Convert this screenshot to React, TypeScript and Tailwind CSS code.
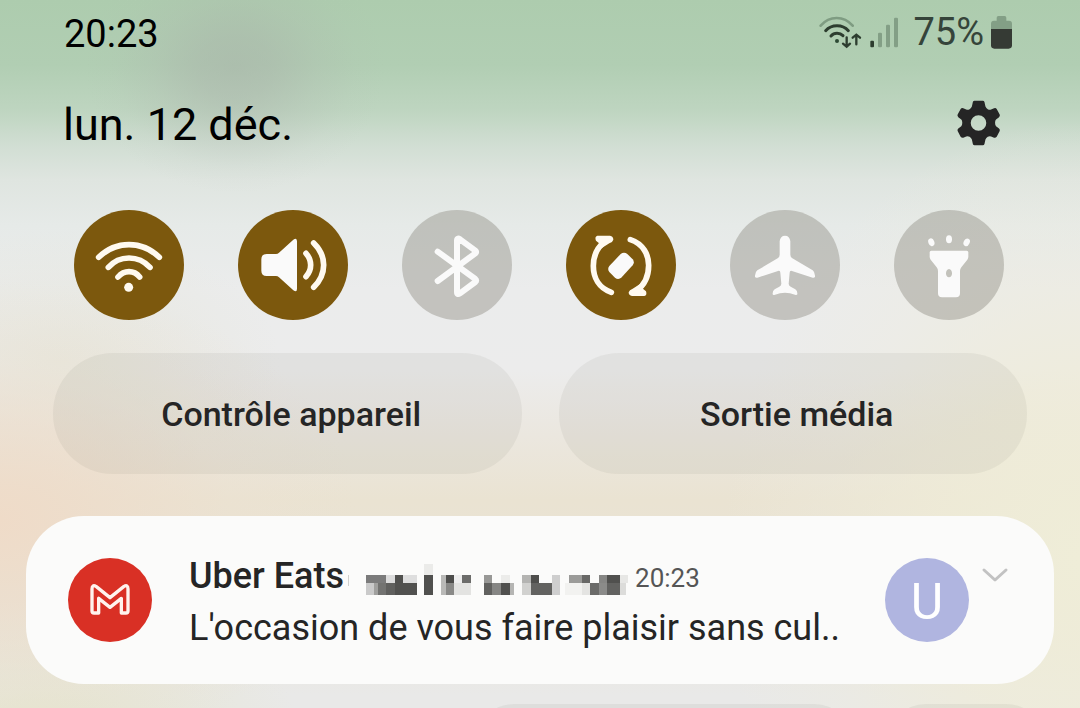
import React from "react";

type Tile = { label: string; on: boolean; icon: React.ReactNode };

const WifiIcon = () => (
  <svg viewBox="42 30 330 330" className="size-full" fill="none" stroke="#fffaf0" strokeWidth="17" strokeLinecap="round" aria-hidden="true">
    <path d="M116 172Q155 134 207 134T298 172" />
    <path d="M145 202Q170 174 207 174T270 202" />
    <path d="M174 231Q188 215 207 215T239 231" />
    <circle cx="206" cy="262" r="13.5" fill="#fffaf0" stroke="none" />
  </svg>
);

const SoundIcon = () => (
  <svg viewBox="534 30 330 330" className="size-full" aria-hidden="true">
    <path d="M604 178Q604 162 620 162H648Q653 162 657 158L700 119Q711 112 711 124V266Q711 278 700 271L657 232Q653 228 648 228H620Q604 228 604 212Z" fill="#fafafa" />
    <g fill="none" stroke="#fffaf0" strokeWidth="17" strokeLinecap="round">
      <path d="M738 160Q752 176 752 195T738 230" />
      <path d="M761 129Q791 158 791 195T761 262" />
    </g>
  </svg>
);

const BluetoothIcon = () => (
  <svg viewBox="36 30 330 330" className="size-full" fill="none" stroke="#fafafa" strokeWidth="18" strokeLinecap="round" strokeLinejoin="round" aria-hidden="true">
    <path d="M143 155L256 237Q261 241 256 246L210 280Q201 286 201 276V122Q201 112 210 118L256 152Q261 156 256 160L143 243" />
  </svg>
);

const RotateIcon = () => (
  <svg viewBox="528 30 330 330" className="size-full" aria-hidden="true">
    <g fill="none" stroke="#fffaf0" strokeWidth="17" strokeLinecap="round">
      <path d="M664 277C626 264 610 232 610 198C610 165 624 140 646 124" />
      <path d="M721 119C760 132 776 164 776 196C776 229 762 256 740 272" />
    </g>
    <path d="M622 107H660Q670 108 670 119Q668 127 658 130L632 146Q629 141 631 133L618 122Q613 110 622 107Z" fill="#fffaf0" />
    <path d="M763 288H726Q716 287 716 277Q718 269 728 266L754 250Q757 256 755 263L768 274Q772 286 763 288Z" fill="#fffaf0" />
    <path d="M692 162Q702 154 712 162L728 178Q735 187 728 196L695 232Q685 241 675 233L658 216Q651 207 658 198Z" fill="#fafafa" />
  </svg>
);

const PlaneIcon = () => (
  <svg viewBox="30 30 330 330" className="size-full" fill="#fafafa" aria-hidden="true">
    <path d="M179 124Q181 107 195 107Q209 107 211 124V164Q211 171 217 175L278 211Q286 217 285 230Q284 234 278 233L216 213Q209 211 209 218L206 251Q206 257 212 260L226 268Q233 273 232 283Q230 286 225 284Q195 272 165 284Q159 286 158 283Q157 273 164 268L178 260Q184 257 184 251L181 218Q181 211 174 213L112 233Q106 234 105 230Q104 217 112 211L173 175Q179 171 179 164Z" />
  </svg>
);

const TorchIcon = () => (
  <svg viewBox="522 30 330 330" className="size-full" fill="#fafafa" aria-hidden="true">
    <path fillRule="evenodd" d="M634 152H740Q745 152 745 157V170Q745 175 742 179L724 202Q720 207 720 213V280Q720 292 708 292H666Q654 292 654 280V213Q654 207 650 202L632 179Q629 175 629 170V157Q629 152 634 152ZM687 207Q678 209 678 220Q678 231 687 232Q696 231 696 220Q696 209 687 207Z" />
    <ellipse cx="634" cy="127" rx="9" ry="12" transform="rotate(-20 634 127)" />
    <ellipse cx="687" cy="118" rx="9" ry="12" />
    <ellipse cx="740" cy="127" rx="9" ry="12" transform="rotate(25 740 127)" />
  </svg>
);

const tiles: Tile[] = [
  { label: "Wi-Fi", on: true, icon: <WifiIcon /> },
  { label: "Son", on: true, icon: <SoundIcon /> },
  { label: "Bluetooth", on: false, icon: <BluetoothIcon /> },
  { label: "Rotation auto", on: true, icon: <RotateIcon /> },
  { label: "Mode Avion", on: false, icon: <PlaneIcon /> },
  { label: "Lampe torche", on: false, icon: <TorchIcon /> },
];

const NetworkIcons = () => (
  <svg viewBox="117 42 240 102" className="h-[34px] w-20" fill="none" strokeLinecap="round" aria-hidden="true">
    <path d="M122 74Q142 51 170 51T218 74" stroke="#7f9c82" strokeWidth="8" />
    <g stroke="#2d3d2f" strokeWidth="9">
      <path d="M137 89Q150 74 171 74T205 89" />
      <path d="M153 105Q160 97 171 97T189 104" />
      <path d="M200 109V136M189 128L200 137L210 128" strokeWidth="7" />
      <path d="M229 130V102M218 110L229 101L240 110" strokeWidth="7" />
    </g>
    <circle cx="171" cy="120" r="6" fill="#2d4a35" />
    <rect x="271" y="119" width="11" height="20" rx="3" fill="#2d3d2f" />
    <g fill="#839f86">
      <rect x="294" y="95" width="12" height="44" rx="4" />
      <rect x="318" y="71" width="12" height="68" rx="4" />
      <rect x="342" y="50" width="12" height="89" rx="4" />
    </g>
  </svg>
);

const BatteryIcon = () => (
  <svg viewBox="630 42 69 102" className="h-[34px] w-[23px]" aria-hidden="true">
    <path d="M633 84V68Q633 59 642 59H650V50Q650 45 655 45H674Q679 45 679 50V59H687Q696 59 696 68V84Z" fill="#839f86" />
    <path d="M633 84H696V133Q696 143 686 143H643Q633 143 633 133Z" fill="#353a34" />
  </svg>
);

const GearIcon = () => (
  <svg viewBox="525 295 140 145" className="h-12 w-[47px]" aria-hidden="true">
    <path
      fillRule="evenodd"
      fill="#252525"
      d="M583 300H608Q612 300 613 304L616 318Q618 323 623 326Q628 329 633 327L642 323Q647 321 650 325L659 342Q661 346 657 350L648 357Q645 360 645 367Q645 374 648 377L657 384Q661 388 659 392L650 409Q647 413 642 412L633 408Q628 406 623 409Q618 412 616 417L613 431Q612 435 608 435H583Q579 435 578 431L575 417Q573 412 568 409Q563 406 558 408L549 412Q544 413 541 409L532 392Q530 388 534 384L543 377Q546 374 546 367Q546 360 543 357L534 350Q530 346 532 342L541 325Q544 321 549 323L558 327Q563 329 568 326Q573 323 575 318L578 304Q579 300 583 300ZM595 344A23.500 23.500 0 1 0 595 391A23.500 23.500 0 1 0 595 344Z"
    />
  </svg>
);

// x, y, width, height, colour
const mosaic: [number, number, number, number, string][] = [
  [50, 101, 61, 26, "#7b7b7b"], [111, 101, 27, 26, "#dcdcdc"], [138, 101, 24, 26, "#50504e"], [162, 101, 42, 26, "#dedede"],
  [50, 127, 25, 34, "#cacaca"], [75, 127, 12, 34, "#a0a09e"], [87, 127, 25, 34, "#737371"], [112, 127, 26, 34, "#60605e"], [138, 127, 66, 34, "#51514f"],
  [226, 68, 26, 33, "#ebebe9"], [226, 101, 26, 60, "#50504e"],
  [276, 101, 14, 60, "#b9b9b7"], [290, 101, 25, 26, "#4d4d4b"], [315, 101, 25, 26, "#eeeeee"], [340, 101, 26, 26, "#6c6c6a"],
  [290, 127, 25, 34, "#898987"], [315, 127, 51, 34, "#e3e3e1"],
  [405, 101, 25, 26, "#989896"], [456, 101, 26, 26, "#ececea"],
  [405, 127, 25, 34, "#61615f"], [430, 127, 26, 34, "#868684"], [456, 127, 26, 34, "#50504e"], [482, 127, 12, 34, "#b5b5b3"],
  [519, 101, 26, 26, "#b4b4b2"], [545, 101, 25, 26, "#4e4e4c"], [609, 101, 25, 60, "#cecece"],
  [519, 127, 26, 34, "#d1d1cf"], [545, 127, 64, 34, "#626260"],
  [660, 101, 38, 26, "#9b9b99"], [698, 101, 25, 26, "#686866"], [749, 101, 25, 26, "#868684"], [774, 101, 38, 26, "#50504e"], [812, 101, 25, 26, "#e7e7e5"],
  [647, 127, 51, 34, "#f2f2f0"], [698, 127, 25, 34, "#e4e4e2"], [723, 127, 26, 34, "#6b6b69"], [749, 127, 25, 34, "#8b8b89"], [774, 127, 38, 34, "#626260"], [812, 127, 18, 34, "#dcdcda"],
];

const Mosaic = () => (
  <svg viewBox="-15 60 855 105" className="h-[35px] w-[285px]" shapeRendering="crispEdges" aria-hidden="true">
    <rect x="-4" y="102" width="3" height="32" fill="#d0d0ce" />
    {mosaic.map(([x, y, w, h, c], i) => (
      <rect key={i} x={x} y={y} width={w} height={h} fill={c} />
    ))}
  </svg>
);

const GmailIcon = () => (
  <svg viewBox="144 143 252 252" className="size-[84px] shrink-0" role="img" aria-label="Gmail">
    <circle cx="270" cy="269" r="126" fill="#d93025" />
    <path d="M216 236Q216 221 229 229L270 262L311 229Q324 221 324 236V302Q324 308 318 308H304V264L270 291L236 264V308H222Q216 308 216 302Z" fill="none" stroke="#fff3ee" strokeWidth="10" strokeLinejoin="round" />
  </svg>
);

const background =
  "bg-[radial-gradient(ellipse_150px_125px_at_235px_68px,#a7aea780,#a9b0a970_25%,#adb4ad38_55%,#b0b8b010_80%,#b0b8b000),radial-gradient(ellipse_360px_240px_at_0%_520px,#efdbc8,#eedccab0_30%,#ede0d050_65%,#ece2d600),radial-gradient(ellipse_360px_440px_at_100%_560px,#efedd8,#efecd8c0_40%,#eeecdc50_72%,#eeece000),radial-gradient(ellipse_220px_130px_at_60px_360px,#e5e5d8c0,#e5e5d800),radial-gradient(ellipse_260px_130px_at_40px_730px,#e4e4cc,#e4e4cc00),linear-gradient(180deg,#adccae_0px,#b1ceb3_65px,#bed5c0_110px,#d1ded3_145px,#dfe5e0_180px,#e6eae8_225px,#ebecec_290px,#ececec_370px,#ebe7df_435px,#eae3d2_500px,#e8e3d6_600px,#e9e9e8_695px)]";

export default function App() {
  return (
    <main className={`flex h-screen min-h-[708px] flex-col overflow-hidden font-['Roboto',sans-serif] text-black ${background}`}>
      <header>
        <div className="flex h-[68px] items-center justify-between pr-[67px] pl-[64px]">
          <time className="text-[38px] leading-none">20:23</time>
          <div className="flex items-center pb-1">
            <NetworkIcons />
            <span className="ml-[14px] text-[38px] leading-none text-[#35443a]">75%</span>
            <span className="ml-[6px] flex"><BatteryIcon /></span>
          </div>
        </div>
        <div className="flex h-[110px] items-center justify-between pr-[78px] pl-[63px]">
          <h1 className="pt-0.5 text-[45px] leading-none font-normal">lun. 12 déc.</h1>
          <button type="button" aria-label="Paramètres" className="flex"><GearIcon /></button>
        </div>
      </header>

      <section className="mt-8 flex justify-between pr-[76px] pl-[74px]">
        {tiles.map((t) => (
          <button
            key={t.label}
            type="button"
            aria-label={t.label}
            aria-pressed={t.on}
            className={`size-[110px] rounded-full ${t.on ? "bg-[#7c580d]" : "bg-[#88857a]/40"}`}
          >
            {t.icon}
          </button>
        ))}
      </section>

      <section className="mt-[33px] grid grid-cols-2 gap-[37px] px-[53px] text-[34px] font-medium text-[#252525]">
        <button type="button" className="h-[121px] rounded-[60px] bg-[#6a6658]/8 pt-0.5 pl-2">Contrôle appareil</button>
        <button type="button" className="h-[121px] rounded-[60px] bg-[#6a6658]/8 pt-0.5 pl-2">Sortie média</button>
      </section>

      <article className="mx-[26px] mt-[42px] flex h-[168px] shrink-0 items-center rounded-[58px] bg-[#fbfbfa] pr-[42px] pl-[42px]">
        <GmailIcon />
        <div className="ml-[37px] min-w-0 flex-1 pt-1 whitespace-nowrap">
          <div className="flex h-[52px] items-center">
            <h2 className="text-[36px] leading-none font-medium text-[#252525]">Uber Eats</h2>
            <div className="flex items-center gap-1.5 pt-1">
              <Mosaic />
              <time className="text-[26px] leading-none text-[#555555]">20:23</time>
            </div>
          </div>
          <p className="flex h-[52px] items-center text-[36px] leading-none text-[#252525]">L'occasion de vous faire plaisir sans cul..</p>
        </div>
        <div className="flex size-[84px] shrink-0 items-center justify-center rounded-full bg-[#b0b5e0] pt-1 text-[50px] leading-none text-white">U</div>
        <button type="button" aria-label="Développer" className="ml-3 flex h-[84px] items-start pt-2">
          <svg viewBox="0 0 31 18" className="h-[18px] w-[31px]" fill="none" stroke="#c2c2c2" strokeWidth="3" strokeLinecap="round" strokeLinejoin="round" aria-hidden="true">
            <path d="M3 4L14 14L25 4" />
          </svg>
        </button>
      </article>

      <footer className="mt-5 flex justify-end gap-[32px] pr-[34px]">
        <button type="button" aria-label="Paramètres de notification" className="h-20 w-[380px] rounded-[40px] bg-[#6a6658]/8" />
        <button type="button" aria-label="Effacer" className="h-20 w-[160px] rounded-[40px] bg-[#6a6658]/8" />
      </footer>
    </main>
  );
}
